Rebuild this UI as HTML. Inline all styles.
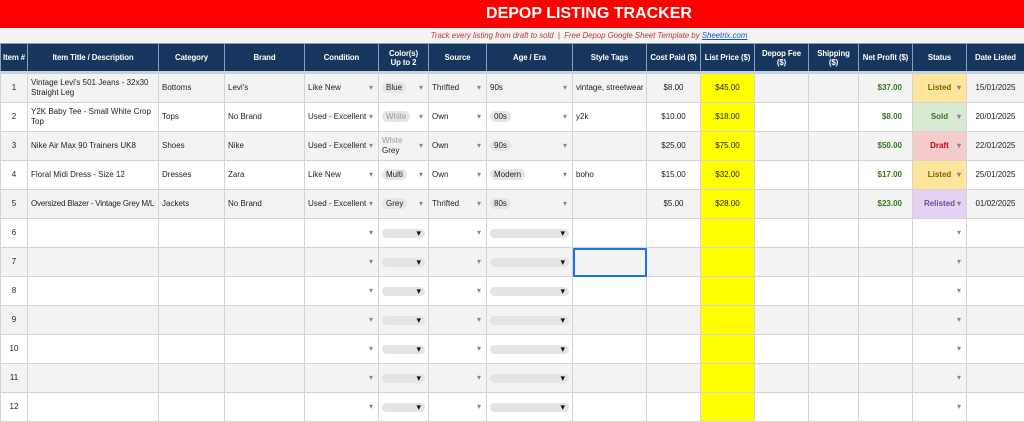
<!DOCTYPE html>
<html><head><meta charset="utf-8"><style>
body{margin:0;width:1024px;height:405px;overflow:hidden;background:#fff;font-family:"Liberation Sans",Arial,sans-serif;}
.title{height:28px;background:#ff0000;color:#fff;font-weight:bold;font-size:16px;text-align:center;line-height:28px;padding-left:154px;}
.sub{height:15px;background:#f3f3f3;color:#c0392b;font-style:italic;font-size:7.8px;text-align:center;line-height:15px;padding-left:154px;}
.sub a{color:#1155cc;text-decoration:underline;}
table{border-collapse:collapse;table-layout:fixed;width:1024px;}
td,th{border:1px solid #d4d4d4;font-size:8px;padding:0 3px;overflow:hidden;white-space:nowrap;position:relative;color:#222;}
th{background:#17365d;color:#fff;height:27px;border-color:#8a9fb8;font-size:7.8px;white-space:normal;line-height:9px;border-bottom:3px solid #c8d0da;padding:0 1px;letter-spacing:-0.1px;}
td{height:28px;line-height:10px;}
tr.g td{background:#f3f3f3;}
.c{text-align:center}.r{text-align:right}
.w{white-space:normal}
.dd::after{content:"▾";position:absolute;right:5px;top:50%;transform:translateY(-50%);color:#888;font-size:8px;}
.chip{background:#e6e6e6;border-radius:8px;padding:1px 4px;}
.pill{display:block;height:9px;background:#e4e4e4;border-radius:6px;position:relative;}
.pill::after{content:"▾";position:absolute;right:4px;top:-1px;color:#111;font-size:9px;}
td.y{background:#ffff00!important;text-align:center;}
.gr{color:#38761d;text-align:right;padding-right:10px;font-weight:bold}
.st{text-align:center;font-weight:bold}
</style></head><body>
<div class="title">DEPOP LISTING TRACKER</div>
<div class="sub">Track every listing from draft to sold &nbsp;|&nbsp; Free Depop Google Sheet Template by <a>Sheetrix.com</a></div>
<table>
<colgroup><col style="width:27px"><col style="width:131px"><col style="width:66px"><col style="width:80px"><col style="width:74px"><col style="width:50px"><col style="width:58px"><col style="width:86px"><col style="width:74px"><col style="width:54px"><col style="width:54px"><col style="width:54px"><col style="width:50px"><col style="width:54px"><col style="width:54px"><col style="width:58px"></colgroup>
<tr><th>Item&nbsp;#</th><th>Item Title / Description</th><th>Category</th><th>Brand</th><th>Condition</th><th>Color(s)<br>Up to 2</th><th>Source</th><th>Age / Era</th><th>Style Tags</th><th style="white-space:nowrap">Cost Paid ($)</th><th style="white-space:nowrap">List Price ($)</th><th>Depop Fee<br>($)</th><th>Shipping<br>($)</th><th style="white-space:nowrap">Net Profit ($)</th><th>Status</th><th>Date Listed</th></tr>
<tr class="g"><td class="c">1</td><td class="w">Vintage Levi's 501 Jeans - 32x30 Straight Leg</td><td>Bottoms</td><td>Levi's</td><td class="dd">Like New</td><td class="dd"><span class="chip">Blue</span></td><td class="dd">Thrifted</td><td class="dd">90s</td><td>vintage, streetwear</td><td class="c">$8.00</td><td class="y">$45.00</td><td></td><td></td><td class="gr">$37.00</td><td class="dd st" style="background:#ffe599;color:#7f6000">Listed</td><td class="c">15/01/2025</td></tr>
<tr><td class="c">2</td><td class="w">Y2K Baby Tee - Small White Crop Top</td><td>Tops</td><td>No Brand</td><td class="dd">Used - Excellent</td><td class="dd"><span class="chip" style="color:#999">White</span></td><td class="dd">Own</td><td class="dd"><span class="chip">00s</span></td><td>y2k</td><td class="c">$10.00</td><td class="y">$18.00</td><td></td><td></td><td class="gr">$8.00</td><td class="dd st" style="background:#d9ead3;color:#38761d">Sold</td><td class="c">20/01/2025</td></tr>
<tr class="g"><td class="c">3</td><td>Nike Air Max 90 Trainers UK8</td><td>Shoes</td><td>Nike</td><td class="dd">Used - Excellent</td><td class="dd w"><span style="color:#999">White</span><br>Grey</td><td class="dd">Own</td><td class="dd"><span class="chip">90s</span></td><td></td><td class="c">$25.00</td><td class="y">$75.00</td><td></td><td></td><td class="gr">$50.00</td><td class="dd st" style="background:#f4cccc;color:#cc0000">Draft</td><td class="c">22/01/2025</td></tr>
<tr><td class="c">4</td><td>Floral Midi Dress - Size 12</td><td>Dresses</td><td>Zara</td><td class="dd">Like New</td><td class="dd"><span class="chip">Multi</span></td><td class="dd">Own</td><td class="dd"><span class="chip">Modern</span></td><td>boho</td><td class="c">$15.00</td><td class="y">$32.00</td><td></td><td></td><td class="gr">$17.00</td><td class="dd st" style="background:#ffe599;color:#7f6000">Listed</td><td class="c">25/01/2025</td></tr>
<tr class="g"><td class="c">5</td><td style="letter-spacing:-0.2px">Oversized Blazer - Vintage Grey M/L</td><td>Jackets</td><td>No Brand</td><td class="dd">Used - Excellent</td><td class="dd"><span class="chip">Grey</span></td><td class="dd">Thrifted</td><td class="dd"><span class="chip">80s</span></td><td></td><td class="c">$5.00</td><td class="y">$28.00</td><td></td><td></td><td class="gr">$23.00</td><td class="dd st" style="background:#e4d1f4;color:#674ea7">Relisted</td><td class="c">01/02/2025</td></tr>
<tr><td class="c">6</td><td></td><td></td><td></td><td class="dd"></td><td><span class="pill"></span></td><td class="dd"></td><td><span class="pill"></span></td><td></td><td></td><td class="y"></td><td></td><td></td><td></td><td class="dd"></td><td></td></tr>
<tr class="g"><td class="c">7</td><td></td><td></td><td></td><td class="dd"></td><td><span class="pill"></span></td><td class="dd"></td><td><span class="pill"></span></td><td style="outline:2px solid #1a73e8;outline-offset:-2px;background:#f3f3f3"></td><td></td><td class="y"></td><td></td><td></td><td></td><td class="dd"></td><td></td></tr>
<tr><td class="c">8</td><td></td><td></td><td></td><td class="dd"></td><td><span class="pill"></span></td><td class="dd"></td><td><span class="pill"></span></td><td></td><td></td><td class="y"></td><td></td><td></td><td></td><td class="dd"></td><td></td></tr>
<tr class="g"><td class="c">9</td><td></td><td></td><td></td><td class="dd"></td><td><span class="pill"></span></td><td class="dd"></td><td><span class="pill"></span></td><td></td><td></td><td class="y"></td><td></td><td></td><td></td><td class="dd"></td><td></td></tr>
<tr><td class="c">10</td><td></td><td></td><td></td><td class="dd"></td><td><span class="pill"></span></td><td class="dd"></td><td><span class="pill"></span></td><td></td><td></td><td class="y"></td><td></td><td></td><td></td><td class="dd"></td><td></td></tr>
<tr class="g"><td class="c">11</td><td></td><td></td><td></td><td class="dd"></td><td><span class="pill"></span></td><td class="dd"></td><td><span class="pill"></span></td><td></td><td></td><td class="y"></td><td></td><td></td><td></td><td class="dd"></td><td></td></tr>
<tr><td class="c">12</td><td></td><td></td><td></td><td class="dd"></td><td><span class="pill"></span></td><td class="dd"></td><td><span class="pill"></span></td><td></td><td></td><td class="y"></td><td></td><td></td><td></td><td class="dd"></td><td></td></tr>
</table>
</body></html>
